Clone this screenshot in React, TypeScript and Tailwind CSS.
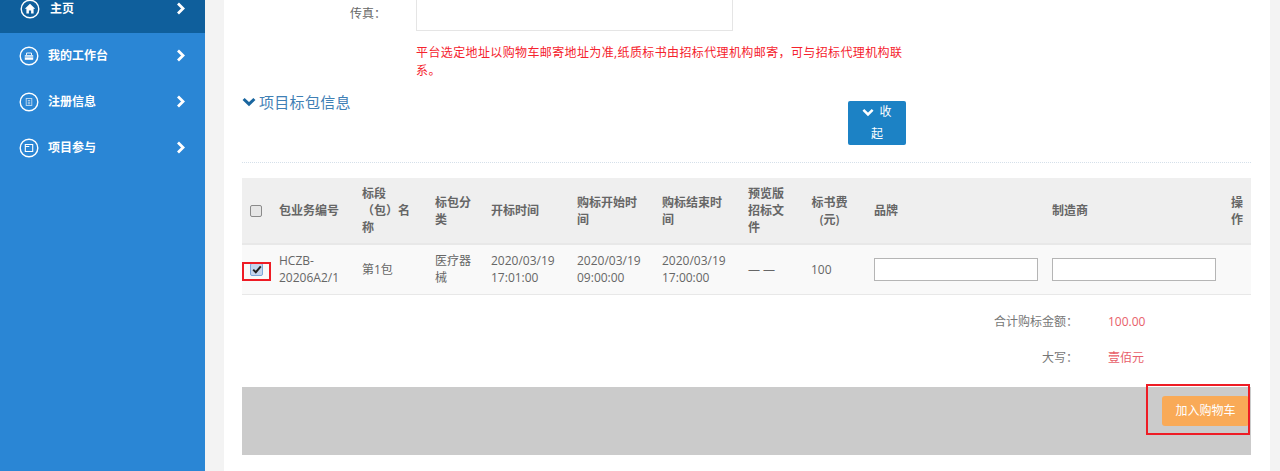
const font = { fontFamily: '"Open Sans","Noto Sans CJK SC",sans-serif' };

function ChevRight() {
  return (
    <svg width="10" height="13" viewBox="0 0 10 13" className="shrink-0">
      <path d="M2 1.6 7 6.5 2 11.4" fill="none" stroke="#fff" strokeWidth="2.8" />
    </svg>
  );
}

function ChevDown({ w, h, color, sw }: { w: number; h: number; color: string; sw: number }) {
  return (
    <svg width={w} height={h} viewBox="0 0 14 10" className="inline-block shrink-0">
      <path d="M1.6 2 7 7.2 12.4 2" fill="none" stroke={color} strokeWidth={sw} />
    </svg>
  );
}

function Glyph({ kind }: { kind: string }) {
  return (
    <svg width="20" height="20" viewBox="0 0 20 20" className="shrink-0">
      <circle cx="10" cy="10" r="8.8" fill="none" stroke="#fff" strokeWidth="1.4" />
      {kind === "home" && <path d="M10 4.8 4.8 9.8h1.6v4.6h2.5v-3h2.2v3h2.5V9.8h1.6z" fill="#fff" />}
      {kind === "desk" && (
        <g>
          <path d="M7.5 9V7h5v2" fill="none" stroke="#fff" strokeWidth="0.9" />
          <path d="M5.8 9.2h8.4v4.6H5.8z" fill="#fff" />
          <path d="M5.8 11h8.4" stroke="#2a86d5" strokeWidth="0.7" />
        </g>
      )}
      {kind === "info" && (
        <g fill="none" stroke="#c4dbf2" strokeWidth="0.9">
          <rect x="7.2" y="6.5" width="5.6" height="7" />
          <path d="M8.8 8.6h2.4M8.8 10.2h2.4M8.8 11.8h2.4" />
        </g>
      )}
      {kind === "proj" && (
        <path d="M6.3 6.5h7.4v7H6.3zM6.3 8.5h4" fill="none" stroke="#fff" strokeWidth="1.1" />
      )}
    </svg>
  );
}

function NavItem({ kind, label, active }: { kind: string; label: string; active?: boolean }) {
  return (
    <div
      className={
        active
          ? "flex h-[33px] items-center justify-between bg-[#0f5f9c] pb-[16px] pl-[20px] pr-[19px]"
          : "flex h-[46px] items-center justify-between pb-[1px] pl-[19px] pr-[19px]"
      }
    >
      <div className={active ? "flex items-center gap-[10px]" : "flex items-center gap-[9px]"}>
        <Glyph kind={kind} />
        <span className="text-[12px] font-bold text-white">{label}</span>
      </div>
      <ChevRight />
    </div>
  );
}

const th = "px-2 text-left align-middle text-[12px] font-semibold leading-[17px] text-[#666]";
const td = "px-2 align-middle text-[12px] leading-[17px] text-[#666]";

export default function App() {
  return (
    <div className="flex h-[471px] w-[1280px] overflow-hidden bg-[#f3f3f3]" style={font}>
      <aside className="h-full w-[205px] shrink-0 bg-[#2a86d5]">
        <NavItem kind="home" label="主页" active />
        <NavItem kind="desk" label="我的工作台" />
        <NavItem kind="info" label="注册信息" />
        <NavItem kind="proj" label="项目参与" />
      </aside>

      <main className="ml-[19px] h-full w-[1046px] shrink-0 bg-white pl-[18px] pr-[19px]">
        <div className="flex h-[31px]">
          <div className="w-[138px] pt-[5px] pl-[108px] text-[12px] text-[#666] whitespace-nowrap">{"传真\uFF1A"}</div>
          <div className="ml-[36px] h-[31px] w-[317px] border border-t-0 border-[#e5e5e5] bg-white" />
        </div>

        <p className="ml-[174px] mt-[13px] w-[496px] text-[12px] leading-[18px] tracking-[0.38px] text-[#f5222d]">
          {"平台选定地址以购物车邮寄地址为准,纸质标书由招标代理机构邮寄\uFF0C可与招标代理机构联系\u3002"}
        </p>

        <div className="mt-[8px] flex h-[75px] items-start justify-between border-b border-dotted border-[#d5e0ea]">
          <div className="mt-[4px] flex items-center gap-[3px] text-[15px] leading-[20px] tracking-[0.3px] text-[#3f80b5]">
            <ChevDown w={14} h={10} color="#1a669f" sw={3} />
            <span>项目标包信息</span>
          </div>
          <button className="mr-[345px] mt-[13px] h-[44px] w-[58px] rounded-[2px] bg-[#1c82c5] px-2 text-[12px] leading-[22px] text-white">
            <span className="mr-[5px] inline-block">
              <ChevDown w={12} h={9} color="#fff" sw={3} />
            </span>
            收 起
          </button>
        </div>

        <table className="mt-[15px] w-[1009px] table-fixed border-collapse">
          <colgroup>
            <col className="w-[29px]" />
            <col className="w-[83px]" />
            <col className="w-[73px]" />
            <col className="w-[56px]" />
            <col className="w-[86px]" />
            <col className="w-[85px]" />
            <col className="w-[86px]" />
            <col className="w-[63px]" />
            <col className="w-[63px]" />
            <col className="w-[178px]" />
            <col className="w-[179px]" />
            <col className="w-[28px]" />
          </colgroup>
          <thead>
            <tr className="h-[66px] border-b-2 border-[#e8e8e8] bg-[#efefef]">
              <th className="pl-[8px] text-left align-middle">
                <span className="block h-[12px] w-[12px] rounded-[2px] border border-[#8a8a8a] bg-[#e6e6e6]" />
              </th>
              <th className={th}>包业务编号</th>
              <th className={th}>
                标段
                <br />
                {"\uFF08包\uFF09名"}
                <br />称
              </th>
              <th className={th}>标包分类</th>
              <th className={th}>开标时间</th>
              <th className={th}>购标开始时间</th>
              <th className={th}>购标结束时间</th>
              <th className={th}>预览版招标文件</th>
              <th className={th}>
                <span className="block w-[37px] text-center">标书费(元)</span>
              </th>
              <th className={th}>品牌</th>
              <th className={th}>制造商</th>
              <th className={th}>操作</th>
            </tr>
          </thead>
          <tbody>
            <tr className="h-[50px] border-b border-[#e8e8e8] bg-[#f9f9f9]">
              <td className="pl-[8px] align-middle">
                <span className="flex h-[13px] w-[13px] items-center justify-center rounded-[2px] border border-[#7da7da] bg-[#c4d6ee]">
                  <svg width="10" height="9" viewBox="0 0 10 9">
                    <path d="M1.2 4.6 3.8 7.2 8.8 1.4" fill="none" stroke="#222" strokeWidth="2" />
                  </svg>
                </span>
              </td>
              <td className={td}>HCZB-20206A2/1</td>
              <td className={td}>第1包</td>
              <td className={td}>医疗器械</td>
              <td className={td}>2020/03/19 17:01:00</td>
              <td className={td}>2020/03/19 09:00:00</td>
              <td className={td}>2020/03/19 17:00:00</td>
              <td className={td}>— —</td>
              <td className={td}>100</td>
              <td className={td}>
                <div className="h-[23px] w-[164px] border border-[#b5b5b5] bg-white" />
              </td>
              <td className={td}>
                <div className="h-[23px] w-[164px] border border-[#b5b5b5] bg-white" />
              </td>
              <td className={td}></td>
            </tr>
          </tbody>
        </table>

        <div className="flex h-[36px] items-center pt-[19px] text-[12px]">
          <span className="w-[836px] text-right text-[#777]">{"合计购标金额\uFF1A"}</span>
          <span className="ml-[30px] text-[#e8606a]">100.00</span>
        </div>
        <div className="flex h-[36px] items-center pt-[18px] text-[12px]">
          <span className="w-[836px] text-right text-[#777]">{"大写\uFF1A"}</span>
          <span className="ml-[30px] text-[#e8606a]">壹佰元</span>
        </div>

        <div className="relative mt-[20px] flex h-[68px] w-[1009px] items-start justify-end bg-[#cbcbcb] pt-[9px] pr-[2px]">
          <button className="h-[30px] w-[87px] rounded-[3px] bg-[#f9aa57] text-[12px] text-white">加入购物车</button>
          <div className="absolute left-[904px] top-[-3px] h-[51px] w-[104px] border-2 border-[#ee1c25]" />
        </div>
      </main>

      <div className="pointer-events-none absolute left-[242px] top-[262px] h-[19px] w-[29px] border-2 border-[#ee1c25]" />
    </div>
  );
}
